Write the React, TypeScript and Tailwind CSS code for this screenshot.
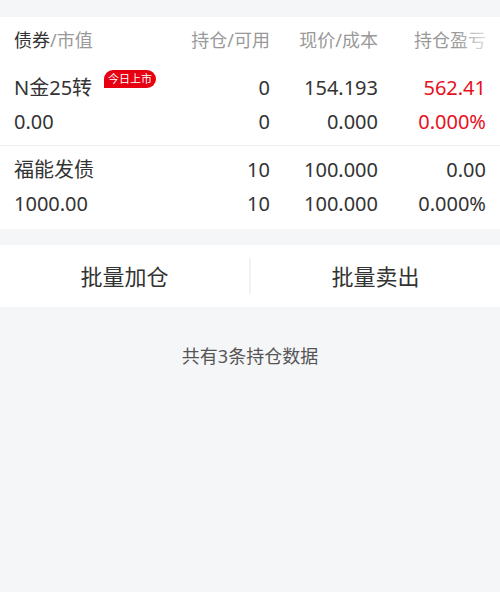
import React from 'react'

type Holding = {
  name: string
  badge?: string
  value: string
  hold: string
  avail: string
  price: string
  cost: string
  pnl: string
  pnlRate: string
  up?: boolean
}

const holdings: Holding[] = [
  {
    name: 'N金25转',
    badge: '今日上市',
    value: '0.00',
    hold: '0',
    avail: '0',
    price: '154.193',
    cost: '0.000',
    pnl: '562.41',
    pnlRate: '0.000%',
    up: true,
  },
  {
    name: '福能发债',
    value: '1000.00',
    hold: '10',
    avail: '10',
    price: '100.000',
    cost: '100.000',
    pnl: '0.00',
    pnlRate: '0.000%',
  },
]

const font = "font-['Noto_Sans','Noto_Sans_CJK_SC',sans-serif]"

const HoldingRow: React.FC<{ item: Holding; last?: boolean }> = ({ item, last }) => {
  const pnlColor = item.up ? 'text-[#e8101e]' : 'text-[#333]'
  return (
    <div className={`pl-[14px] pr-[14px] ${last ? '' : 'border-b border-[#f0f0f0]'}`}>
      <div className="flex h-[81px] flex-col justify-center gap-[4px] text-[20px] leading-[30px] text-[#333]">
        <div className="flex">
          <div className="flex flex-1 items-start">
            <span>{item.name}</span>
            {item.badge && (
              <span className="ml-[12px] mt-[-3px] flex h-[18px] items-center rounded-tl-[9px] rounded-tr-[9px] rounded-br-[9px] bg-[#e60012] px-[4px] text-[11px] leading-none text-white">
                {item.badge}
              </span>
            )}
          </div>
          <div className="w-[110px] text-right">{item.hold}</div>
          <div className="w-[108px] text-right">{item.price}</div>
          <div className={`w-[108px] text-right ${pnlColor}`}>{item.pnl}</div>
        </div>
        <div className="flex">
          <div className="flex-1">{item.value}</div>
          <div className="w-[110px] text-right">{item.avail}</div>
          <div className="w-[108px] text-right">{item.cost}</div>
          <div className={`w-[108px] text-right ${pnlColor}`}>{item.pnlRate}</div>
        </div>
      </div>
    </div>
  )
}

export default function App() {
  return (
    <div className={`${font} flex min-h-[592px] w-[500px] flex-col bg-[#f5f6f8]`}>
      <div className="h-[17px]" />

      <div className="bg-white">
        <div className="relative flex h-[47px] items-center pl-[14px] pr-[14px] text-[18px] text-[#999]">
          <div className="flex-1">
            <span className="text-[#333]">债券</span>/市值
          </div>
          <div className="w-[110px] text-right">持仓/可用</div>
          <div className="w-[108px] text-right">现价/成本</div>
          <div className="w-[108px] text-right">持仓盈亏</div>
          <div className="pointer-events-none absolute right-0 top-0 h-full w-[44px] bg-gradient-to-r from-white/0 to-white" />
        </div>
        {holdings.map((h, i) => (
          <HoldingRow key={h.name} item={h} last={i === holdings.length - 1} />
        ))}
        <div className="h-[2px]" />
      </div>

      <div className="h-[16px]" />

      <div className="flex h-[62px] items-center bg-white text-[22px] text-[#333]">
        <button className="flex-1 text-center">批量加仓</button>
        <div className="h-[36px] w-[2px] bg-[#f2f2f2]" />
        <button className="flex-1 text-center">批量卖出</button>
      </div>

      <div className="pt-[36px] text-center text-[18px] text-[#555]">共有3条持仓数据</div>
    </div>
  )
}
